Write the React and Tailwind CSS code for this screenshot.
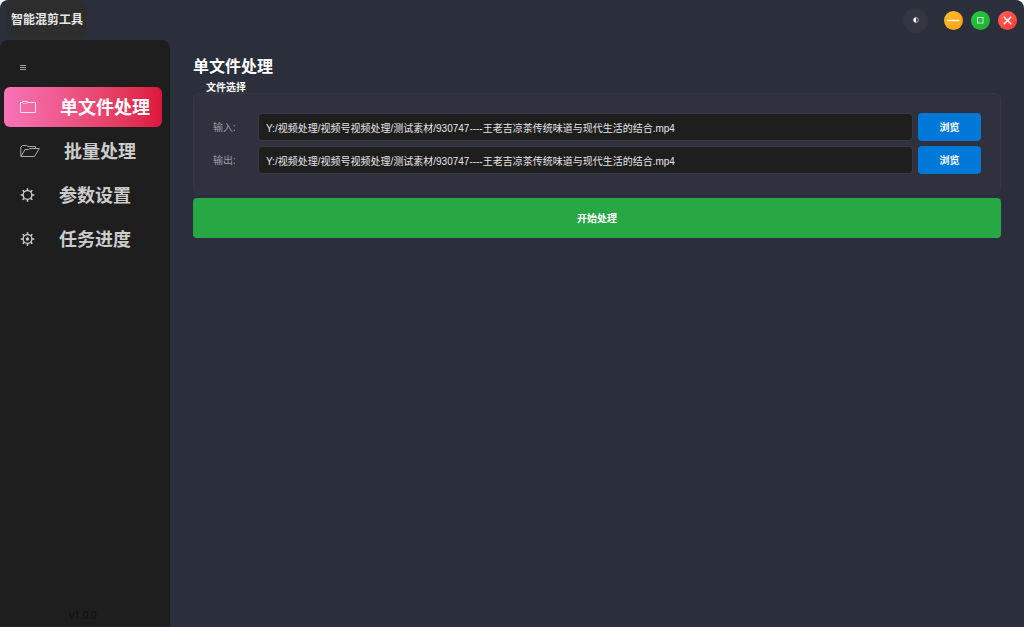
import React, { useState } from "react";

const FolderIcon = () => (
    <svg width="20" height="16" viewBox="0 0 20 16" fill="none" stroke="currentColor" strokeWidth="1" className="shrink-0 opacity-80">
        <path d="M0.5 13.5V3.5H2.5V2.5H7.5V3.5H15.5V13.5Z" />
        <path d="M2.5 4.5H7.5" strokeOpacity="0.5" />
    </svg>
);

const OpenFolderIcon = () => (
    <svg width="20" height="16" viewBox="0 0 20 16" fill="none" stroke="currentColor" strokeWidth="1" className="shrink-0 opacity-80">
        <path d="M0.8 13.5V4L2.5 2.5H6.5L8 3.5H15.5V5.5" />
        <path d="M1 13.5L5 6.5H8.5L10 5.5H19.3L14.5 13.5Z" />
    </svg>
);

const GearIcon = ({ dot }) => (
    <svg width="15" height="16" viewBox="0 0 15 16" fill="none" stroke="currentColor" className="shrink-0">
        <circle cx="7.5" cy="8" r="4.4" strokeWidth="1.4" />
        <path strokeWidth="1.6" d="M7.5 1.2V3.6M7.5 12.4V14.8M0.7 8H3.1M11.9 8H14.3M2.7 3.2L4.4 4.9M10.6 11.1L12.3 12.8M2.7 12.8L4.4 11.1M10.6 4.9L12.3 3.2" />
        {dot && <circle cx="7.5" cy="8" r="1.7" fill="currentColor" stroke="none" />}
    </svg>
);

const navItems = [
    { id: "single", label: "单文件处理", icon: <FolderIcon />, gap: "gap-5" },
    { id: "batch", label: "批量处理", icon: <OpenFolderIcon />, gap: "gap-6" },
    { id: "params", label: "参数设置", icon: <GearIcon />, gap: "gap-6" },
    { id: "tasks", label: "任务进度", icon: <GearIcon dot />, gap: "gap-6" },
];

const TitleBar = () => (
    <header className="flex h-10 items-start justify-between px-[7px]">
        <div className="flex h-[39px] items-center rounded-lg bg-[#2d2d2d] px-1 text-[12px] font-bold text-[#e8e8e8]">
            智能混剪工具
        </div>
        <div className="flex h-10 items-center gap-2">
            <button aria-label="切换主题" className="mr-2 flex h-[25px] w-[25px] items-center justify-center rounded-full bg-[#333541] text-white">
                <svg width="6" height="6" viewBox="0 0 6 6">
                    <circle cx="3" cy="3" r="2.4" fill="none" stroke="currentColor" strokeWidth="0.8" strokeOpacity="0.7" />
                    <path d="M3 0.5A2.5 2.5 0 0 0 3 5.5Z" fill="currentColor" />
                </svg>
            </button>
            <button aria-label="最小化" className="flex h-[19px] w-[19px] items-center justify-center rounded-full bg-linear-to-br from-[#ffbd2e] to-[#ff9f0a] text-white">
                <svg width="13" height="3" viewBox="0 0 13 3">
                    <path d="M0.5 1.5H12.5" stroke="currentColor" strokeWidth="1.4" />
                </svg>
            </button>
            <button aria-label="最大化" className="flex h-[19px] w-[19px] items-center justify-center rounded-full bg-linear-to-br from-[#28c840] to-[#20ad36] text-white">
                <svg width="7" height="7" viewBox="0 0 7 7" className="mt-px">
                    <rect x="0.5" y="0.5" width="5.5" height="5.5" fill="none" stroke="currentColor" strokeOpacity="0.75" />
                </svg>
            </button>
            <button aria-label="关闭" className="flex h-[19px] w-[19px] items-center justify-center rounded-full bg-linear-to-br from-[#ff5f57] to-[#ff3b30] text-white">
                <svg width="9" height="9" viewBox="0 0 9 9">
                    <path d="M0.8 0.8L8.2 8.2M8.2 0.8L0.8 8.2" stroke="currentColor" strokeWidth="1.5" />
                </svg>
            </button>
        </div>
    </header>
);

const Sidebar = ({ active, onSelect }) => (
    <aside className="flex w-[170px] shrink-0 flex-col rounded-t-lg border-b-2 border-[#241f24] bg-[#1e1e1e] pl-1 pr-2">
        <button aria-label="菜单" className="mb-3 mt-5 flex h-[15px] w-[37px] items-center justify-center text-[#b0b0b0]">
            <svg width="6" height="5" viewBox="0 0 6 5">
                <path d="M0 0.5H6M0 2.5H6M0 4.5H6" stroke="currentColor" strokeWidth="0.9" />
            </svg>
        </button>
        <nav className="flex flex-col gap-1">
            {
                navItems.map(item => <button
                    key={item.id}
                    onClick={() => onSelect(item.id)}
                    className={`flex h-10 items-center rounded-md pl-4 text-[18px] font-bold ${item.gap} ${
                        item.id === active
                            ? "bg-linear-to-r from-[#f873b8] to-[#dc143c] text-white"
                            : "text-[#cccccc]"
                    }`}
                >
                    {item.icon}
                    <span className="whitespace-nowrap">{item.label}</span>
                </button>)
            }
        </nav>
        <p className="mb-[3px] mt-auto text-center text-[10px] leading-[14px] text-[#0d0d0d]">v1.0.0</p>
    </aside>
);

const FileRow = ({ id, label, value, onChange }) => (
    <div className="flex items-center">
        <label htmlFor={id} className="w-[45px] shrink-0 text-[10px] text-[#9a9ba3]">{label}</label>
        <input
            id={id}
            type="text"
            value={value}
            onChange={e => onChange(e.target.value)}
            className="h-7 min-w-0 flex-1 rounded border border-[#3a3a3c] bg-[#1e1e1e] px-[7px] font-['Liberation_Sans','Noto_Sans_CJK_SC',sans-serif] text-[10px] text-[#e6e6e6] outline-none"
        />
        <button className="ml-[5px] h-7 w-[63px] shrink-0 rounded bg-[#0078d7] text-[10px] font-bold text-white">
            浏览
        </button>
    </div>
);

const App = () => {
    const [active, setActive] = useState("single");
    const [input, setInput] = useState("Y:/视频处理/视频号视频处理/测试素材/930747----王老吉凉茶传统味道与现代生活的结合.mp4");
    const [output, setOutput] = useState("Y:/视频处理/视频号视频处理/测试素材/930747----王老吉凉茶传统味道与现代生活的结合.mp4");

    return (
        <div className="bg-white font-['Open_Sans','Noto_Sans_CJK_SC',sans-serif]">
            <div className="flex min-h-screen flex-col rounded-t-lg bg-[#2b2e3b]">
                <TitleBar />
                <div className="flex flex-1">
                    <Sidebar active={active} onSelect={setActive} />
                    <main className="flex min-w-0 flex-1 flex-col pl-[23px] pr-[23px] pt-4">
                        <h1 className="text-[16px] font-bold leading-5 text-white">单文件处理</h1>
                        <section className="mt-[5px]">
                            <h2 className="pl-[13px] text-[10px] font-bold leading-3 text-white">文件选择</h2>
                            <div className="flex flex-col gap-[5px] rounded-md border border-[#353743] bg-[#2f323e] px-[19px] py-[19px]">
                                <FileRow id="input-path" label="输入:" value={input} onChange={setInput} />
                                <FileRow id="output-path" label="输出:" value={output} onChange={setOutput} />
                            </div>
                        </section>
                        <button className="mt-1 h-10 rounded bg-[#28a745] text-[10px] font-bold text-white">
                            开始处理
                        </button>
                    </main>
                </div>
            </div>
        </div>
    );
};

export default App;
